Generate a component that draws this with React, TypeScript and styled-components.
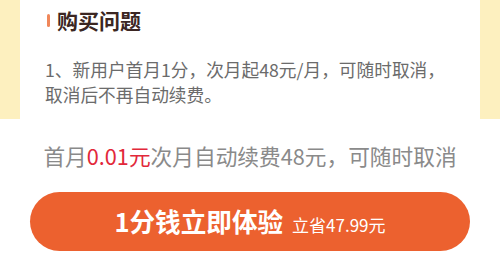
import styled, { createGlobalStyle } from "styled-components";

const GlobalStyle = createGlobalStyle`
  html, body {
    margin: 0;
    padding: 0;
    background: #fff;
  }
  body {
    font-family: "Noto Sans CJK SC", "Noto Sans", sans-serif;
  }
`;

const Page = styled.div`
  width: 500px;
  height: 261px;
  overflow: hidden;
  background: #fff;
`;

const YellowBand = styled.section`
  background: #fdf0bf;
  padding: 0 20px;
`;

const Card = styled.div`
  background: #fff;
  height: 119px;
  box-sizing: border-box;
  padding: 8px 25px 0 25px;
`;

const TitleRow = styled.div`
  display: flex;
  align-items: center;
  gap: 7px;
  height: 24px;
  padding-left: 2px;
`;

const TitleMark = styled.span`
  width: 3px;
  height: 13px;
  border-radius: 2px;
  background: #f0875a;
`;

const Title = styled.h3`
  margin: 0;
  font-size: 21px;
  line-height: 24px;
  font-weight: 700;
  color: #3b2622;
`;

const Body = styled.p`
  margin: 25px 0 0;
  font-size: 17.7px;
  line-height: 25px;
  color: #6b6b6b;
`;

const Footer = styled.div`
  display: flex;
  flex-direction: column;
  align-items: center;
  padding-top: 23px;
`;

const Notice = styled.div`
  font-size: 21.7px;
  line-height: 28px;
  color: #8a8a8a;
  white-space: nowrap;
`;

const Price = styled.span`
  color: #e2283a;
`;

const BuyButton = styled.button`
  margin-top: 22px;
  width: 440px;
  height: 59px;
  border: none;
  border-radius: 30px;
  background: #ec612f;
  color: #fff;
  display: flex;
  align-items: baseline;
  justify-content: center;
  gap: 9px;
  padding: 0;
  padding-top: 14px;
  box-sizing: border-box;
  font-family: "Noto Sans CJK SC", "Noto Sans", sans-serif;
`;

const ButtonMain = styled.span`
  font-size: 25.6px;
  font-weight: 700;
  line-height: 30px;
`;

const ButtonSub = styled.span`
  font-size: 17px;
  line-height: 20px;
`;

export default function App() {
  return (
    <Page>
      <GlobalStyle />
      <YellowBand>
        <Card>
          <TitleRow>
            <TitleMark />
            <Title>购买问题</Title>
          </TitleRow>
          <Body>
            1、新用户首月1分，次月起48元/月，可随时取消，
            <br />
            取消后不再自动续费。
          </Body>
        </Card>
      </YellowBand>
      <Footer>
        <Notice>
          首月<Price>0.01元</Price>次月自动续费48元，可随时取消
        </Notice>
        <BuyButton type="button">
          <ButtonMain>1分钱立即体验</ButtonMain>
          <ButtonSub>立省47.99元</ButtonSub>
        </BuyButton>
      </Footer>
    </Page>
  );
}
